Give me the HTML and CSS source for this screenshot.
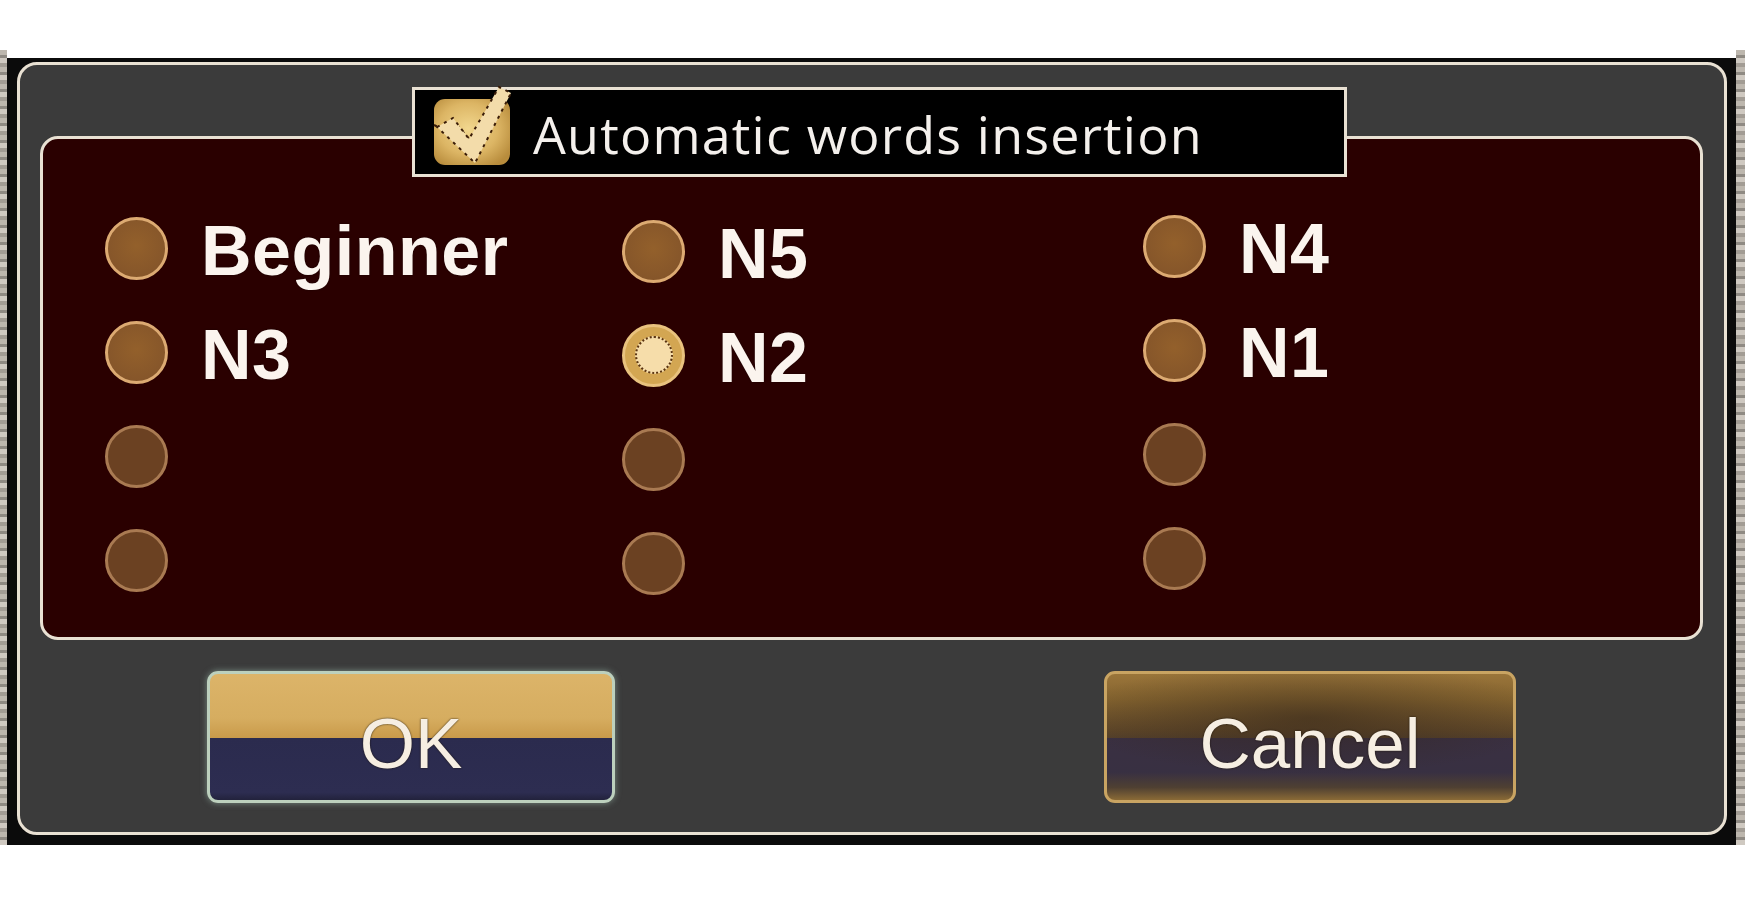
FILE: index.html
```html
<!DOCTYPE html>
<html>
<head>
<meta charset="utf-8">
<title>Automatic words insertion</title>
<link rel="stylesheet" href="styles.css">
</head>
<body>
<div class="screen">
  <div class="frame">
    <div class="strip strip-left"></div>
    <div class="stage">
      <div class="dialog">
        <div class="panel">
          <div class="title">
            <svg class="check" width="80" height="70" viewBox="0 0 80 70">
              <defs>
                <radialGradient id="cg" cx="45%" cy="45%" r="65%">
                  <stop offset="0" stop-color="#f2d78e"/>
                  <stop offset="0.6" stop-color="#dcb564"/>
                  <stop offset="1" stop-color="#b88c3c"/>
                </radialGradient>
              </defs>
              <rect x="1" y="2" width="76" height="66" rx="11" fill="url(#cg)"/>
              <path d="M1 28 L14 34 L26 30 L36 42" fill="none" stroke="#3a1c08" stroke-width="2" stroke-dasharray="3 5"/>
              <path d="M4 30 L20 21 L36 42 L66 -10 L78 -4 L42 66 Z" fill="#f3dcaa" stroke="#3a1c08" stroke-width="2" stroke-dasharray="3 5"/>
            </svg>
            <span class="title-text">Automatic words insertion</span>
          </div>
          <div class="options">
            <div class="col col1">
              <div class="opt"><span class="radio"></span><span class="lbl">Beginner</span></div>
              <div class="opt"><span class="radio"></span><span class="lbl">N3</span></div>
              <div class="opt"><span class="radio dim"></span></div>
              <div class="opt"><span class="radio dim"></span></div>
            </div>
            <div class="col col2">
              <div class="opt"><span class="radio"></span><span class="lbl">N5</span></div>
              <div class="opt"><span class="radio selected"><span class="dot"></span></span><span class="lbl">N2</span></div>
              <div class="opt"><span class="radio dim"></span></div>
              <div class="opt"><span class="radio dim"></span></div>
            </div>
            <div class="col col3">
              <div class="opt"><span class="radio"></span><span class="lbl">N4</span></div>
              <div class="opt"><span class="radio"></span><span class="lbl">N1</span></div>
              <div class="opt"><span class="radio dim"></span></div>
              <div class="opt"><span class="radio dim"></span></div>
            </div>
          </div>
        </div>
        <div class="buttons">
          <button class="btn btn-ok">OK</button>
          <button class="btn btn-cancel">Cancel</button>
        </div>
      </div>
    </div>
    <div class="strip strip-right"></div>
  </div>
</div>
</body>
</html>
```
FILE: styles.css
```css
html, body {
  margin: 0;
  background: #ffffff;
}
body {
  width: 1745px;
  height: 900px;
  overflow: hidden;
  font-family: "Liberation Sans", Arial, sans-serif;
}
.screen {
  padding-top: 50px;
}
.frame {
  display: flex;
  height: 795px;
}
.strip {
  flex: none;
  background: repeating-linear-gradient(to bottom, #bdb7ae 0 5px, #8f8a83 5px 8px, #cfc9c1 8px 13px, #a29c94 13px 17px);
}
.strip-left {
  width: 7px;
}
.strip-right {
  width: 9px;
}
.stage {
  flex: 1;
  margin-top: 8px;
  background: #0b0b0b;
  padding: 4px 9px 10px 10px;
  display: flex;
}
.dialog {
  flex: 1;
  box-sizing: border-box;
  border: 3px solid #e9e1d3;
  border-radius: 20px;
  background: #3b3b3b;
  padding: 71px 21px 0 20px;
  display: flex;
  flex-direction: column;
}
.panel {
  position: relative;
  box-sizing: border-box;
  height: 504px;
  border: 3px solid #e9e1d3;
  border-radius: 18px;
  background: #2a0000;
}
.title {
  position: absolute;
  left: 369px;
  top: -52px;
  width: 935px;
  height: 90px;
  box-sizing: border-box;
  border: 3px solid #e9e1d3;
  background: #000;
  display: flex;
  align-items: center;
  padding-left: 18px;
}
.check {
  flex: none;
  overflow: visible;
}
.title-text {
  margin-left: 20px;
  margin-top: 4px;
  font-family: "Open Sans", "DejaVu Sans", sans-serif;
  font-size: 52px;
  letter-spacing: 1.2px;
  line-height: 1;
  color: #f4f0ec;
}
.options {
  display: flex;
  padding: 57px 0 0 62px;
}
.col {
  display: flex;
  flex-direction: column;
}
.col1 {
  width: 517px;
}
.col2 {
  width: 521px;
  margin-top: 3px;
}
.col3 {
  margin-top: -2px;
}
.opt {
  height: 104px;
  display: flex;
  align-items: center;
}
.radio {
  flex: none;
  width: 63px;
  height: 63px;
  box-sizing: border-box;
  border-radius: 50%;
  border: 3px solid #dcaa72;
  background: radial-gradient(circle at 50% 45%, #93602b 0%, #86562a 70%, #7d4f25 100%);
  display: flex;
  align-items: center;
  justify-content: center;
}
.radio.dim {
  border-color: #a97a52;
  background: #6b4122;
}
.radio.selected {
  border-color: #e9c27e;
  background: #d3a652;
}
.dot {
  width: 38px;
  height: 38px;
  box-sizing: border-box;
  border-radius: 50%;
  border: 2px dotted #5a3412;
  background: #f6ddaa;
}
.lbl {
  margin-left: 33px;
  margin-top: 6px;
  font-size: 70px;
  font-weight: bold;
  letter-spacing: 0.5px;
  line-height: 1;
  color: #fbf4ee;
  text-shadow: 0 0 2px #1a0000;
}
.buttons {
  display: flex;
  justify-content: space-between;
  padding: 31px 187px 0 167px;
}
.btn {
  box-sizing: border-box;
  height: 132px;
  border-radius: 11px;
  padding: 12px 0 0 0;
  margin: 0;
  font-family: "Liberation Sans", Arial, sans-serif;
  font-size: 71px;
  line-height: 1;
  color: #f6eee2;
  text-shadow: 0 0 2px #1a1208;
  display: flex;
  align-items: center;
  justify-content: center;
}
.btn-ok {
  width: 408px;
  border: 3px solid #bcd0bd;
  box-shadow: 0 0 6px rgba(170, 205, 190, 0.55);
  background: linear-gradient(to bottom, #dcb469 0%, #d6ad60 35%, #c99a4a 50.8%, #2b2b4e 50.8%, #2d2d51 94%, #22223c 100%);
}
.btn-cancel {
  width: 412px;
  border: 3px solid #c9a462;
  background:
    radial-gradient(ellipse 60% 45% at 50% 35%, rgba(50, 36, 24, 0.55), rgba(50, 36, 24, 0) 100%),
    linear-gradient(to bottom, #9a753a 0%, #85642f 20%, #5f4729 45%, #54402b 50.8%, #3a3042 50.8%, #383042 78%, #4f4032 90%, #8a6a36 100%);
}
```
